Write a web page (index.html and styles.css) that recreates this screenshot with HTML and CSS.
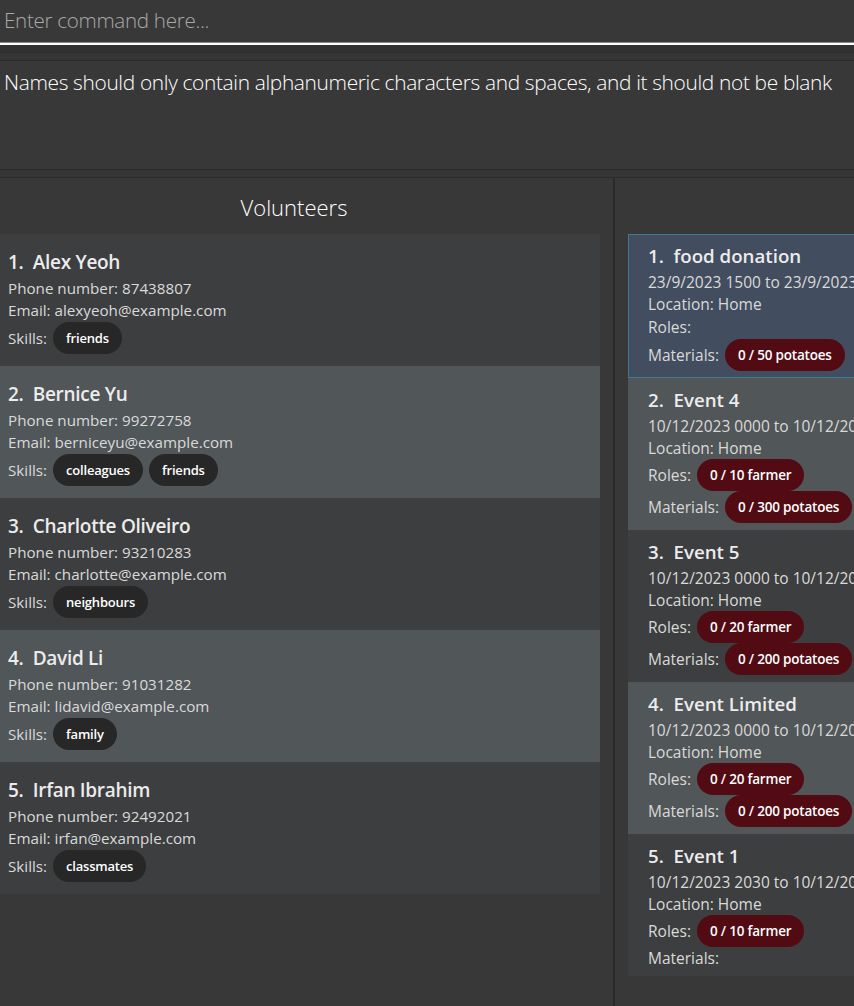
FILE: index.html
```html
<!DOCTYPE html>
<html>
<head>
<meta charset="utf-8">
<link rel="stylesheet" href="styles.css">
</head>
<body>
<div class="app">
  <div class="command">
    <span class="placeholder">Enter command here...</span>
  </div>
  <div class="split-top"></div>
  <div class="result">Names should only contain alphanumeric characters and spaces, and it should not be blank</div>
  <div class="split-h"></div>
  <div class="panels">
    <div class="panel panel-left">
      <div class="panel-title">Volunteers</div>
      <div class="list">
        <div class="vcard odd">
          <div class="name">1.&nbsp; Alex Yeoh</div>
          <div class="small">Phone number: 87438807</div>
          <div class="small">Email: alexyeoh@example.com</div>
          <div class="row pillrow"><span class="small">Skills:</span><span class="pill skill">friends</span></div>
        </div>
        <div class="vcard even">
          <div class="name">2.&nbsp; Bernice Yu</div>
          <div class="small">Phone number: 99272758</div>
          <div class="small">Email: berniceyu@example.com</div>
          <div class="row pillrow"><span class="small">Skills:</span><span class="pill skill">colleagues</span><span class="pill skill">friends</span></div>
        </div>
        <div class="vcard odd">
          <div class="name">3.&nbsp; Charlotte Oliveiro</div>
          <div class="small">Phone number: 93210283</div>
          <div class="small">Email: charlotte@example.com</div>
          <div class="row pillrow"><span class="small">Skills:</span><span class="pill skill">neighbours</span></div>
        </div>
        <div class="vcard even">
          <div class="name">4.&nbsp; David Li</div>
          <div class="small">Phone number: 91031282</div>
          <div class="small">Email: lidavid@example.com</div>
          <div class="row pillrow"><span class="small">Skills:</span><span class="pill skill">family</span></div>
        </div>
        <div class="vcard odd">
          <div class="name">5.&nbsp; Irfan Ibrahim</div>
          <div class="small">Phone number: 92492021</div>
          <div class="small">Email: irfan@example.com</div>
          <div class="row pillrow"><span class="small">Skills:</span><span class="pill skill">classmates</span></div>
        </div>
      </div>
    </div>
    <div class="divider"></div>
    <div class="panel panel-right">
      <div class="panel-title"></div>
      <div class="list">
        <div class="ecard selected">
          <div class="name">1.&nbsp; food donation</div>
          <div class="small">23/9/2023 1500 to 23/9/2023 1800</div>
          <div class="small">Location: Home</div>
          <div class="row empty-row"><span class="small">Roles:</span></div>
          <div class="row pillrow"><span class="small">Materials:</span><span class="pill red">0 / 50 potatoes</span></div>
        </div>
        <div class="ecard even">
          <div class="name">2.&nbsp; Event 4</div>
          <div class="small">10/12/2023 0000 to 10/12/2023 2359</div>
          <div class="small">Location: Home</div>
          <div class="row pillrow"><span class="small">Roles:</span><span class="pill red">0 / 10 farmer</span></div>
          <div class="row pillrow"><span class="small">Materials:</span><span class="pill red">0 / 300 potatoes</span></div>
        </div>
        <div class="ecard odd">
          <div class="name">3.&nbsp; Event 5</div>
          <div class="small">10/12/2023 0000 to 10/12/2023 2359</div>
          <div class="small">Location: Home</div>
          <div class="row pillrow"><span class="small">Roles:</span><span class="pill red">0 / 20 farmer</span></div>
          <div class="row pillrow"><span class="small">Materials:</span><span class="pill red">0 / 200 potatoes</span></div>
        </div>
        <div class="ecard even">
          <div class="name">4.&nbsp; Event Limited</div>
          <div class="small">10/12/2023 0000 to 10/12/2023 2359</div>
          <div class="small">Location: Home</div>
          <div class="row pillrow"><span class="small">Roles:</span><span class="pill red">0 / 20 farmer</span></div>
          <div class="row pillrow"><span class="small">Materials:</span><span class="pill red">0 / 200 potatoes</span></div>
        </div>
        <div class="ecard odd">
          <div class="name">5.&nbsp; Event 1</div>
          <div class="small">10/12/2023 2030 to 10/12/2023 2359</div>
          <div class="small">Location: Home</div>
          <div class="row pillrow"><span class="small">Roles:</span><span class="pill red">0 / 10 farmer</span></div>
          <div class="row"><span class="small">Materials:</span></div>
        </div>
      </div>
    </div>
  </div>
</div>
</body>
</html>
```

FILE: styles.css
```css
html, body {
  margin: 0;
  padding: 0;
  background: #383838;
}
body {
  width: 854px;
  height: 1006px;
  overflow: hidden;
  font-family: "Open Sans", "Noto Sans", sans-serif;
  color: #ffffff;
}
.app {
  display: flex;
  flex-direction: column;
  height: 1006px;
}
.command {
  height: 45px;
  flex: none;
  box-sizing: border-box;
  background: #383838;
  border-bottom: 2px solid #ffffff;
  box-shadow: 0 -1px 0 #8a8a8a inset;
  display: flex;
  align-items: center;
  padding: 0 0 3px 4px;
}
.placeholder {
  font-weight: 300;
  font-size: 20.6px;
  color: #a8a8a8;
  letter-spacing: -0.3px;
}
.split-top {
  height: 16px;
  flex: none;
  background: linear-gradient(to bottom,
    #313131 0, #313131 7px,
    #2b2b2b 7px, #2b2b2b 8px,
    #353535 8px, #353535 15px,
    #2b2b2b 15px, #2b2b2b 16px);
}
.split-h {
  height: 7px;
  flex: none;
  background: #353535;
  border-top: 1px solid #2b2b2b;
  border-bottom: 1px solid #2b2b2b;
}
.result {
  height: 108px;
  flex: none;
  padding: 7px 4px 0;
  box-sizing: border-box;
  font-weight: 300;
  font-size: 20.9px;
  letter-spacing: -0.35px;
  color: #ffffff;
  white-space: nowrap;
}
.panels {
  flex: 1;
  display: flex;
  min-height: 0;
}
.panel {
  display: flex;
  flex-direction: column;
  background: #383838;
}
.panel-left {
  width: 613px;
  flex: none;
}
.divider {
  width: 2px;
  flex: none;
  background: #2a2a2a;
}
.panel-right {
  flex: 1;
  padding-left: 13px;
  overflow: hidden;
}
.panel-title {
  height: 56px;
  flex: none;
  display: flex;
  align-items: center;
  justify-content: center;
  font-weight: 300;
  font-size: 22px;
  color: #ffffff;
  width: 588px;
}
.panel-left .panel-title {
  padding-top: 2px;
  box-sizing: border-box;
}
.list {
  display: flex;
  flex-direction: column;
}
.vcard {
  width: 600px;
  height: 132px;
  box-sizing: border-box;
  padding: 16px 8px 12px;
  display: flex;
  flex-direction: column;
}
.odd { background: #3c3e3f; }
.even { background: #515658; }
.name {
  height: 24px;
  line-height: 24px;
  font-size: 19px;
  font-weight: 600;
  color: #ececec;
  white-space: nowrap;
  letter-spacing: -0.3px;
}
.vcard .name { margin-bottom: 3px; }
.small {
  height: 22px;
  line-height: 22px;
  font-size: 15.2px;
  color: #dadada;
  white-space: nowrap;
}
.row {
  display: flex;
  align-items: center;
  gap: 6px;
  height: 22px;
}
.pillrow {
  height: 32px;
}
.vcard .pillrow { margin-top: 1px; }
.pill {
  height: 32px;
  border-radius: 16px;
  padding: 0 13px;
  display: flex;
  align-items: center;
  font-size: 13px;
  font-weight: 600;
  color: #ffffff;
  white-space: nowrap;
  letter-spacing: -0.2px;
}
.skill { background: #272727; }
.red { background: #520b13; }
.ecard {
  width: 620px;
  box-sizing: border-box;
  border: 1px solid transparent;
  padding: 9px 19px 6px;
  display: flex;
  flex-direction: column;
}
.ecard .name {
  font-size: 18.7px;
  margin-bottom: 3px;
  letter-spacing: 0;
}
.ecard .small {
  font-size: 15.5px;
}
.ecard .pill { font-size: 13.5px; }
.ecard .empty-row { height: 24px; }
.ecard.selected {
  background: #424d5f;
  border-color: #3e7b91;
}
.ecard .row { gap: 6px; }
```
